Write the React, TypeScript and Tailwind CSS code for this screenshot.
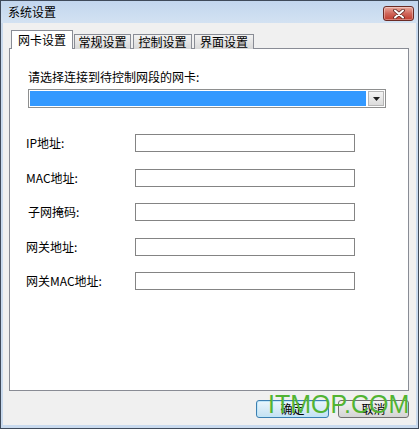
import React from "react";

const font = { fontFamily: '"Noto Sans CJK SC", "Noto Sans", sans-serif' };

function CloseButton() {
  return (
    <div className="w-[31px] h-[15px] rounded-[3px] border border-[#6b2b25] bg-gradient-to-b from-[#e9a99f] via-[#d0665a] to-[#c0392b] flex items-center justify-center shadow-[inset_0_0_0_1px_rgba(255,255,255,0.35)]">
      <svg width="12" height="10" viewBox="0 0 12 10">
        <path d="M2 1.5 L10 8.5 M10 1.5 L2 8.5" stroke="#5a2520" strokeWidth="3.6" strokeLinecap="round" />
        <path d="M2 1.5 L10 8.5 M10 1.5 L2 8.5" stroke="#ffffff" strokeWidth="2" strokeLinecap="round" />
      </svg>
    </div>
  );
}

function Field({ label, mt, lx }: { label: string; mt: string; lx: string }) {
  return (
    <div className={`flex items-center h-[18px] ${mt}`}>
      <div className={`w-[109px] text-[12px] leading-[14px] text-black ${lx}`}>{label}</div>
      <div className="w-[220px] h-[18px] border border-[#848484] bg-white" />
    </div>
  );
}

export default function App() {
  return (
    <div
      className="relative w-[419px] h-[429px] border border-[#3f4a5a] bg-[#c9daee] flex flex-col overflow-hidden"
      style={font}
    >
      {/* title bar */}
      <div className="h-[22px] flex items-center justify-between pl-[7px] pr-[4px] bg-gradient-to-b from-[#c2d6ee] to-[#d3e2f2]">
        <span className="text-[12px] leading-[14px] text-black">系统设置</span>
        <div className="mt-[3px]">
          <CloseButton />
        </div>
      </div>

      {/* client */}
      <div className="flex-1 mx-[2px] mb-[3px] bg-[#f0f0f0] flex flex-col pl-[6px] pr-[7px] pt-[8px]">
        {/* tabs */}
        <div className="flex items-end h-[18px] pl-[2px] relative z-10">
          <div className="w-[62px] h-[19px] bg-white border border-[#898c95] border-b-0 flex items-center justify-center text-[12px] leading-[14px] text-black pb-[1px]">
            网卡设置
          </div>
          <div className="w-[57px] h-[15px] ml-[1px] bg-gradient-to-b from-[#f2f2f2] to-[#d8d8d8] border border-[#898c95] border-b-0 flex items-center justify-center text-[12px] leading-[14px] text-black">
            常规设置
          </div>
          <div className="w-[59px] h-[15px] ml-[2px] bg-gradient-to-b from-[#f2f2f2] to-[#d8d8d8] border border-[#898c95] border-b-0 flex items-center justify-center text-[12px] leading-[14px] text-black">
            控制设置
          </div>
          <div className="w-[60px] h-[15px] ml-[2px] bg-gradient-to-b from-[#f2f2f2] to-[#d8d8d8] border border-[#898c95] border-b-0 flex items-center justify-center text-[12px] leading-[14px] text-black">
            界面设置
          </div>
        </div>

        {/* panel */}
        <div className="h-[343px] -mt-[1px] border border-[#898c95] bg-white flex flex-col pl-[16px] pt-[21px]">
          <div className="ml-[2px] text-[12px] leading-[14px] text-black">请选择连接到待控制网段的网卡:</div>
          <div className="ml-[2px] mt-[5px] w-[358px] h-[19px] border border-[#8e8f8f] bg-white flex p-[1px]">
            <div className="flex-1 bg-[#3399ff]" />
            <div className="w-[16px] ml-[2px] border border-[#b6b6b6] bg-gradient-to-b from-[#f4f4f4] to-[#dcdcdc] flex items-center justify-center">
              <svg width="7" height="4" viewBox="0 0 7 4">
                <path d="M0 0 L7 0 L3.5 4 Z" fill="#1e1e1e" />
              </svg>
            </div>
          </div>

          <Field label="IP地址:" mt="mt-[26px]" lx="" />
          <Field label="MAC地址:" mt="mt-[17px]" lx="" />
          <Field label="子网掩码:" mt="mt-[16px]" lx="pl-[2px]" />
          <Field label="网关地址:" mt="mt-[17px]" lx="" />
          <Field label="网关MAC地址:" mt="mt-[16px]" lx="" />
        </div>

        {/* buttons */}
        <div className="flex justify-end gap-[9px] mt-[9px]">
          <div className="w-[73px] h-[18px] rounded-[3px] border border-[#3c7fb1] bg-gradient-to-b from-[#eaf6fd] to-[#c4e1f2] shadow-[inset_0_0_0_1px_#bfe6f9] flex items-center justify-center text-[12px] leading-[14px] text-black">
            确定
          </div>
          <div className="w-[71px] h-[18px] rounded-[3px] border border-[#707070] bg-gradient-to-b from-[#f2f2f2] to-[#d4d4d4] flex items-center justify-center text-[12px] leading-[14px] text-black">
            取消
          </div>
        </div>
      </div>

      {/* watermark */}
      <div
        className="absolute left-[267px] top-[389px] text-[25px] leading-[28px] text-[#52b433] tracking-[0px]"
        style={{ fontFamily: '"Liberation Sans", Arial, sans-serif' }}
      >
        ITMOP.COM
      </div>
    </div>
  );
}
